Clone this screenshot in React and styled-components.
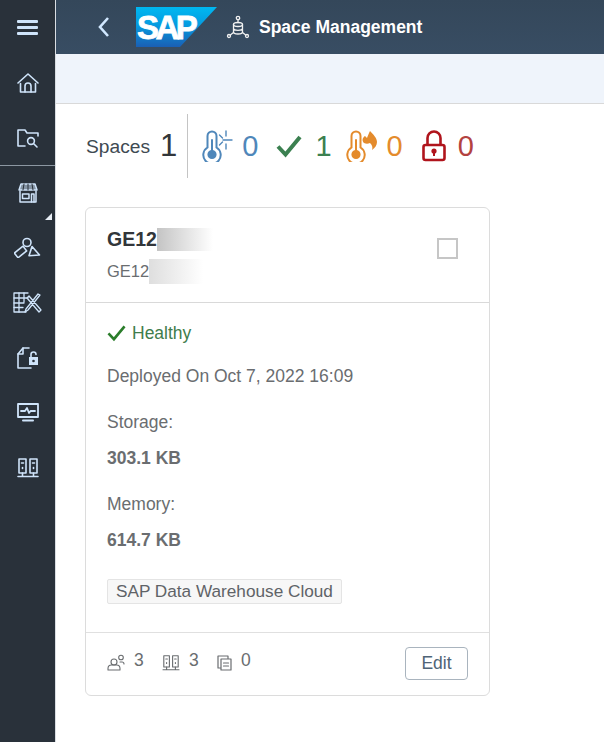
import React from "react";
import styled, { createGlobalStyle } from "styled-components";

const Global = createGlobalStyle`
  html, body { margin: 0; padding: 0; background: #fff; }
  body { font-family: "Liberation Sans", Arial, sans-serif; overflow: hidden; }
`;
const Page = styled.div`display:flex;width:604px;height:742px;overflow:hidden;background:#fff;`;
const Rail = styled.nav`width:55px;flex:none;background:#29313a;display:flex;flex-direction:column;border-right:1px solid #d9dde2;`;
const RailItem = styled.div`position:relative;height:55px;display:flex;align-items:center;justify-content:center;color:#cfe4fa;`;
const RailDivider = styled.div`height:1px;background:#8c97a2;margin:0 0 -1px;`;
const Corner = styled.span`position:absolute;right:3px;bottom:0;width:0;height:0;border-style:solid;border-width:0 0 7px 7px;border-color:transparent transparent #e8eef5 transparent;`;
const Main = styled.div`flex:1;min-width:0;display:flex;flex-direction:column;`;
const Shell = styled.header`height:54px;flex:none;background:linear-gradient(#34475a,#384d63);display:flex;align-items:center;color:#fff;`;
const Back = styled.div`width:80px;box-sizing:border-box;padding-left:41px;display:flex;color:#d1e8ff;`;
const HeaderIcon = styled.div`display:flex;margin:0 9px 0 8px;color:#f2f2f2;`;
const Title = styled.div`font-size:17.5px;font-weight:700;color:#fff;`;
const SubBar = styled.div`height:49px;flex:none;background:#eff4fb;border-bottom:1px solid #d9d9d9;`;
const Content = styled.main`padding:10px 0 0 29px;`;
const Kpis = styled.div`display:flex;align-items:center;height:64px;`;
const KpiLabel = styled.span`font-size:19.2px;color:#404a52;margin:2px 0 0 1px;`;
const KpiCount = styled.span`font-size:31px;color:#32363a;margin-left:10px;`;
const KpiDivider = styled.span`width:1px;height:64px;background:#c4c4c4;margin:0 14px 0 10px;`;
const Kpi = styled.div`display:flex;align-items:center;font-size:29px;color:${p=>p.$c};margin-right:${p=>p.$m}px;gap:${p=>p.$g}px;`;
const Card = styled.section`width:405px;height:489px;margin-top:29px;box-sizing:border-box;border:1px solid #dcdcdc;border-radius:6px;display:flex;flex-direction:column;background:#fff;`;
const CardHead = styled.div`height:95px;flex:none;box-sizing:border-box;padding:20px 31px 0 21px;border-bottom:1px solid #d9d9d9;display:flex;justify-content:space-between;align-items:flex-start;`;
const Names = styled.div`display:flex;flex-direction:column;gap:10px;`;
const Name = styled.div`display:flex;height:22px;align-items:center;font-size:${p=>p.$bold?19.5:16.5}px;font-weight:${p=>p.$bold?700:400};color:${p=>p.$bold?"#32363a":"#6a6d70"};`;
const Blur = styled.span`display:block;flex:none;width:${p=>p.$w}px;height:${p=>p.$h}px;background:linear-gradient(90deg,${p=>p.$from},#fff);`;
const Check = styled.div`width:21px;height:21px;box-sizing:border-box;border:2px solid #c6c6c6;margin-top:10px;`;
const CardBody = styled.div`flex:1;padding:19px 0 0 21px;display:flex;flex-direction:column;align-items:flex-start;`;
const Status = styled.div`display:flex;align-items:center;gap:6px;font-size:17.5px;color:#3f7d4c;height:22px;`;
const StatusTick = styled.span`display:flex;color:#2b7d2b;`;
const Line = styled.div`font-size:17.5px;color:#6a6d70;margin-top:${p=>p.$t}px;line-height:22px;`;
const Value = styled.div`font-size:17.5px;font-weight:700;color:#6a6d70;margin-top:${p=>p.$t}px;line-height:22px;`;
const Tag = styled.div`margin-top:28px;height:25px;box-sizing:border-box;padding:0 8px;border:1px solid #e4e4e4;border-radius:2px;background:#f7f7f7;color:#5f6367;font-size:17.2px;line-height:23px;white-space:nowrap;`;
const CardFoot = styled.div`height:63px;flex:none;box-sizing:border-box;border-top:1px solid #e0e0e0;padding:0 21px;display:flex;justify-content:space-between;align-items:flex-start;`;
const Stats = styled.div`display:flex;align-items:center;margin-top:17px;`;
const Stat = styled.div`display:flex;align-items:center;gap:9px;font-size:17.5px;color:#6a6d70;width:${p=>p.$w}px;`;
const StatIcon = styled.span`display:flex;margin-top:4px;`;
const EditBtn = styled.button`margin-top:14px;width:63px;height:33px;background:#fff;border:1px solid #a9b4be;border-radius:4px;color:#4f6477;font:17.5px "Liberation Sans",Arial,sans-serif;padding:0;`;

const S = ({w=24,h=24,children,sw=1.6,vb}) => (
  <svg width={w} height={h} viewBox={vb||`0 0 ${w} ${h}`} fill="none" stroke="currentColor" strokeWidth={sw} strokeLinecap="round" strokeLinejoin="round">{children}</svg>
);
const Burger = () => <svg width="21" height="15" viewBox="0 0 21 15" fill="currentColor"><rect width="21" height="3" rx="1"/><rect y="6" width="21" height="3" rx="1"/><rect y="12" width="21" height="3" rx="1"/></svg>;
const Home = () => <S w={22} h={21}><path d="M1 11 11 2l10 9"/><path d="M3.500 11.500V20h15v-8.500"/><path d="M8 20v-6a3 3 0 0 1 6 0v6"/></S>;
const FolderSearch = () => <S w={22} h={22}><path d="M8 19H1V3h7l2 3h11v3"/><circle cx="14" cy="14" r="3.400"/><path d="m16.500 16.500 3.500 3.500"/></S>;
const Store = () => (
  <S w={20} h={20} sw={1.5}>
    <path d="M3 1h14l2 6H1z" fill="currentColor" fillOpacity=".55"/><path d="M6 1 5 7M10 1v6M14 1l1 6" stroke="#29313a" strokeWidth="1"/>
    <path d="M2 8v11h16V8"/><rect x="4.500" y="11" width="6.500" height="4.500"/><path d="M13.500 19v-8h2.500v8"/>
  </S>
);
const Shapes = () => <S w={27} h={21}><circle cx="13" cy="5.500" r="4"/><rect x="3.500" y="9.500" width="6" height="11" transform="rotate(52 6.500 15)"/><path d="m18 9.500 7.500 8.500-10.500.8z"/></S>;
const TableTools = () => (
  <S w={29} h={21} sw={1.300}>
    <path d="M15 1H1v19h12"/><path d="M1 6h14M1 11h10M1 15.500h9M6 1v19M11 1v9"/>
    <path d="m14 6 12 14 2-2L16 4zM27 3 15 18l-3 2 1-3L25 2z"/>
  </S>
);
const FileLock = () => (
  <S w={22} h={22}>
    <path d="M12 1H6L1 7v14h13"/><path d="M6 1v6H1"/>
    <rect x="12" y="10" width="9" height="8" fill="currentColor" stroke="none"/>
    <path d="M14 10V7.500a2.500 2.500 0 0 1 5 0"/><circle cx="16.500" cy="14" r="1.300" fill="#29313a" stroke="none"/>
  </S>
);
const Monitor = () => <S w={22} h={19} sw={1.800}><rect x="1" y="1" width="20" height="13"/><path d="M4 8h4l2-3 2 5 1.500-2H18"/><path d="M6 17.500h10" strokeWidth="2"/></S>;
const Servers = ({w=22,h=20,sw=1.600}) => (
  <S w={w} h={h} sw={sw} vb="0 0 22 20">
    <rect x="2" y="1" width="7" height="14"/><rect x="13" y="1" width="7" height="14"/>
    <path d="M4.500 5h2M15.500 5h2M5.500 9.500v1M16.500 9.500v1M5.500 15v3.500M16.500 15v3.500M1 18.500h20"/>
  </S>
);
const DbNet = () => (
  <S w={24} h={24} sw={1.300}>
    <circle cx="12" cy="3" r="1.700"/><path d="M12 5v2.500"/><ellipse cx="12" cy="9.500" rx="4.500" ry="2"/>
    <path d="M7.500 9.500v7.500c0 1 2 2 4.500 2s4.500-1 4.500-2V9.500M7.500 13.300c0 1 2 2 4.500 2s4.500-1 4.500-2"/>
    <circle cx="3" cy="21" r="1.500"/><circle cx="21" cy="21" r="1.500"/><path d="M4.300 20l3.200-2.500M19.700 20l-3.200-2.500"/>
  </S>
);
const Thermo = ({children}) => (
  <svg width="32" height="32" viewBox="0 0 32 32" fill="none" stroke="currentColor" strokeWidth="2" strokeLinecap="round">
    <path d="M5.500 17.500V6a4.500 4.500 0 0 1 9 0v11.500a8.700 8.700 0 1 1-9 0z"/>
    <circle cx="10" cy="24.500" r="3.600" fill="currentColor"/><path d="M10 22V10"/>{children}
  </svg>
);
const Tick = ({w=26,h=24,sw=4}) => <svg width={w} height={h} viewBox="0 0 26 24" fill="none" stroke="currentColor" strokeWidth={sw}><path d="M2 12.500 9.500 20.500 24 3"/></svg>;
const Lock = () => (
  <svg width="24" height="32" viewBox="0 0 24 32" fill="none" stroke="#b0141c" strokeWidth="2.600">
    <path d="M5.500 15V8a6.500 6.500 0 0 1 13 0v7"/><rect x="1.500" y="15" width="21" height="15" rx="2"/>
    <circle cx="12" cy="21" r="2.600" fill="#b0141c" stroke="none"/><path d="M12 21v5" strokeWidth="2"/>
  </svg>
);
const SapLogo = () => (
  <svg width="82" height="41" viewBox="0 0 82 41">
    <defs><linearGradient id="sap" x1="0" y1="0" x2="0" y2="1"><stop offset="0" stopColor="#00b8f1"/><stop offset="0.45" stopColor="#069be0"/><stop offset="1" stopColor="#1a5fb4"/></linearGradient></defs>
    <path d="M0 0h81L44 40H0z" fill="url(#sap)"/>
    <text x="1" y="32" fontFamily="Liberation Sans" fontWeight="700" fontSize="33" letterSpacing="-3.500" fill="#fff" stroke="#fff" strokeWidth=".8">SAP</text>
  </svg>
);
const Users = () => <S w={18} h={17} sw={1.100}><circle cx="7" cy="8" r="3"/><path d="M1 16v-1.500A3.500 3.500 0 0 1 4.500 11h5a3.500 3.500 0 0 1 3.500 3.500V16z"/><circle cx="14" cy="3.500" r="2.300"/><path d="M13 8h2a2 2 0 0 1 2 2"/></S>;
const Docs = () => <S w={15} h={16} sw={1.200}><path d="M3.500 13H1V1h10v2.500"/><rect x="4" y="4" width="10" height="11"/><path d="M6.500 8h5M6.500 11h5"/></S>;

const railTop = [Home, FolderSearch];
const railBottom = [TableTools, FileLock, Monitor, Servers];

export default function App() {
  return (
    <Page>
      <Global />
      <Rail>
        <RailItem><Burger /></RailItem>
        {railTop.map((I, i) => <RailItem key={i}><I /></RailItem>)}
        <RailDivider />
        <RailItem><Store /><Corner /></RailItem>
        <RailItem><Shapes /></RailItem>
        {railBottom.map((I, i) => <RailItem key={i}><I /></RailItem>)}
      </Rail>
      <Main>
        <Shell>
          <Back><svg width="14" height="22" viewBox="0 0 14 22" fill="none" stroke="currentColor" strokeWidth="2.600"><path d="M11 2 3 11l8 9"/></svg></Back>
          <SapLogo />
          <HeaderIcon><DbNet /></HeaderIcon>
          <Title>Space Management</Title>
        </Shell>
        <SubBar />
        <Content>
          <Kpis>
            <KpiLabel>Spaces</KpiLabel>
            <KpiCount>1</KpiCount>
            <KpiDivider />
            <Kpi $c="#4f87ba" $m={18} $g={8}>
              <Thermo><path d="M21 10h9M17.500 5l3 3M24 1v5M17.500 15l3-3M24 14v5" strokeWidth="1.400"/></Thermo>
              <span>0</span>
            </Kpi>
            <Kpi $c="#3b8050" $m={14} $g={13}>
              <Tick />
              <span>1</span>
            </Kpi>
            <Kpi $c="#e48b2c" $m={19} $g={9}>
              <Thermo><path d="M18 13c-2-2-2-5 1-7l2 2c1-3 2-5 3-7 3 3 7 7 7 11 0 3-2 6-5 8 1-3 0-5-2-7-2 1-4 1-6 0z" fill="currentColor" stroke="none"/></Thermo>
              <span>0</span>
            </Kpi>
            <Kpi $c="#b3423f" $m={0} $g={12}>
              <Lock />
              <span>0</span>
            </Kpi>
          </Kpis>
          <Card>
            <CardHead>
              <Names>
                <Name $bold>GE12<Blur $w={56} $h={23} $from="#c4c4c4" /></Name>
                <Name>GE12<Blur $w={54} $h={25} $from="#dedede" /></Name>
              </Names>
              <Check />
            </CardHead>
            <CardBody>
              <Status><StatusTick><Tick w={19} h={18} sw={3.600} /></StatusTick>Healthy</Status>
              <Line $t={21}>Deployed On Oct 7, 2022 16:09</Line>
              <Line $t={24}>Storage:</Line>
              <Value $t={14}>303.1 KB</Value>
              <Line $t={24}>Memory:</Line>
              <Value $t={14}>614.7 KB</Value>
              <Tag>SAP Data Warehouse Cloud</Tag>
            </CardBody>
            <CardFoot>
              <Stats>
                <Stat $w={55}><StatIcon><Users /></StatIcon>3</Stat>
                <Stat $w={55}><StatIcon><Servers w={18} h={16} sw={1.400} /></StatIcon>3</Stat>
                <Stat $w={40}><StatIcon><Docs /></StatIcon>0</Stat>
              </Stats>
              <EditBtn>Edit</EditBtn>
            </CardFoot>
          </Card>
        </Content>
      </Main>
    </Page>
  );
}
